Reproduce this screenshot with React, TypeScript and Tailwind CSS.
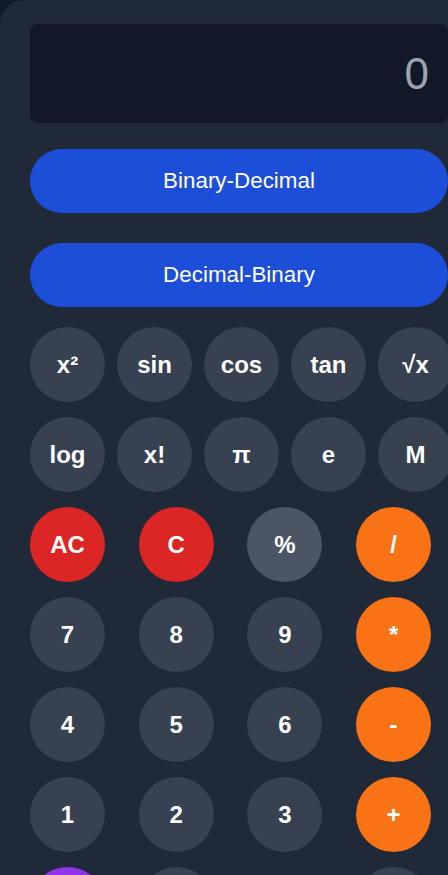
import React from "react";

const sci = ["x²", "sin", "cos", "tan", "√x", "log", "x!", "π", "e", "M"];

type B = { label: string; cls: string };
const main: (B | null)[] = [
  { label: "AC", cls: "bg-[#dc2626]" },
  { label: "C", cls: "bg-[#dc2626]" },
  { label: "%", cls: "bg-[#4b5563]" },
  { label: "/", cls: "bg-[#f97316]" },
  { label: "7", cls: "bg-[#374151]" },
  { label: "8", cls: "bg-[#374151]" },
  { label: "9", cls: "bg-[#374151]" },
  { label: "*", cls: "bg-[#f97316]" },
  { label: "4", cls: "bg-[#374151]" },
  { label: "5", cls: "bg-[#374151]" },
  { label: "6", cls: "bg-[#374151]" },
  { label: "-", cls: "bg-[#f97316]" },
  { label: "1", cls: "bg-[#374151]" },
  { label: "2", cls: "bg-[#374151]" },
  { label: "3", cls: "bg-[#374151]" },
  { label: "+", cls: "bg-[#f97316]" },
  { label: "±", cls: "bg-[#9333ea]" },
  { label: "0", cls: "bg-[#374151]" },
  null,
  { label: "=", cls: "bg-[#374151]" },
];

export default function App() {
  return (
    <div
      className="w-[448px] h-[875px] overflow-hidden bg-[#111827]"
      style={{ fontFamily: '"Liberation Sans", Arial, sans-serif' }}
    >
      <div className="w-[500px] min-h-[1000px] rounded-3xl bg-[#1f2937] pl-[30px] pt-6">
        <div className="w-[418px] h-[99px] rounded-lg bg-[#111827] flex items-center justify-end pr-[19px]">
          <span className="text-[44px] leading-none text-[#9ca3af]">0</span>
        </div>
        <button className="mt-[26px] w-[418px] h-16 rounded-full bg-[#1d4ed8] text-white text-[22.4px] flex items-center justify-center">
          Binary-Decimal
        </button>
        <button className="mt-[30px] w-[418px] h-16 rounded-full bg-[#1d4ed8] text-white text-[22.4px] flex items-center justify-center">
          Decimal-Binary
        </button>
        <div className="mt-5 grid grid-cols-[repeat(5,75px)] auto-rows-[75px] gap-x-3 gap-y-[15px]">
          {sci.map((s) => (
            <button
              key={s}
              className="w-[75px] h-[75px] rounded-full bg-[#374151] text-white font-bold text-[24px] flex items-center justify-center"
            >
              {s}
            </button>
          ))}
        </div>
        <div className="mt-[15px] grid grid-cols-[repeat(4,75px)] auto-rows-[75px] gap-x-[33.7px] gap-y-[15px]">
          {main.map((b, i) =>
            b ? (
              <button
                key={i}
                className={`w-[75px] h-[75px] rounded-full text-white font-bold text-[24px] flex items-center justify-center ${b.cls}`}
              >
                {b.label}
              </button>
            ) : (
              <div key={i} />
            )
          )}
        </div>
      </div>
    </div>
  );
}
